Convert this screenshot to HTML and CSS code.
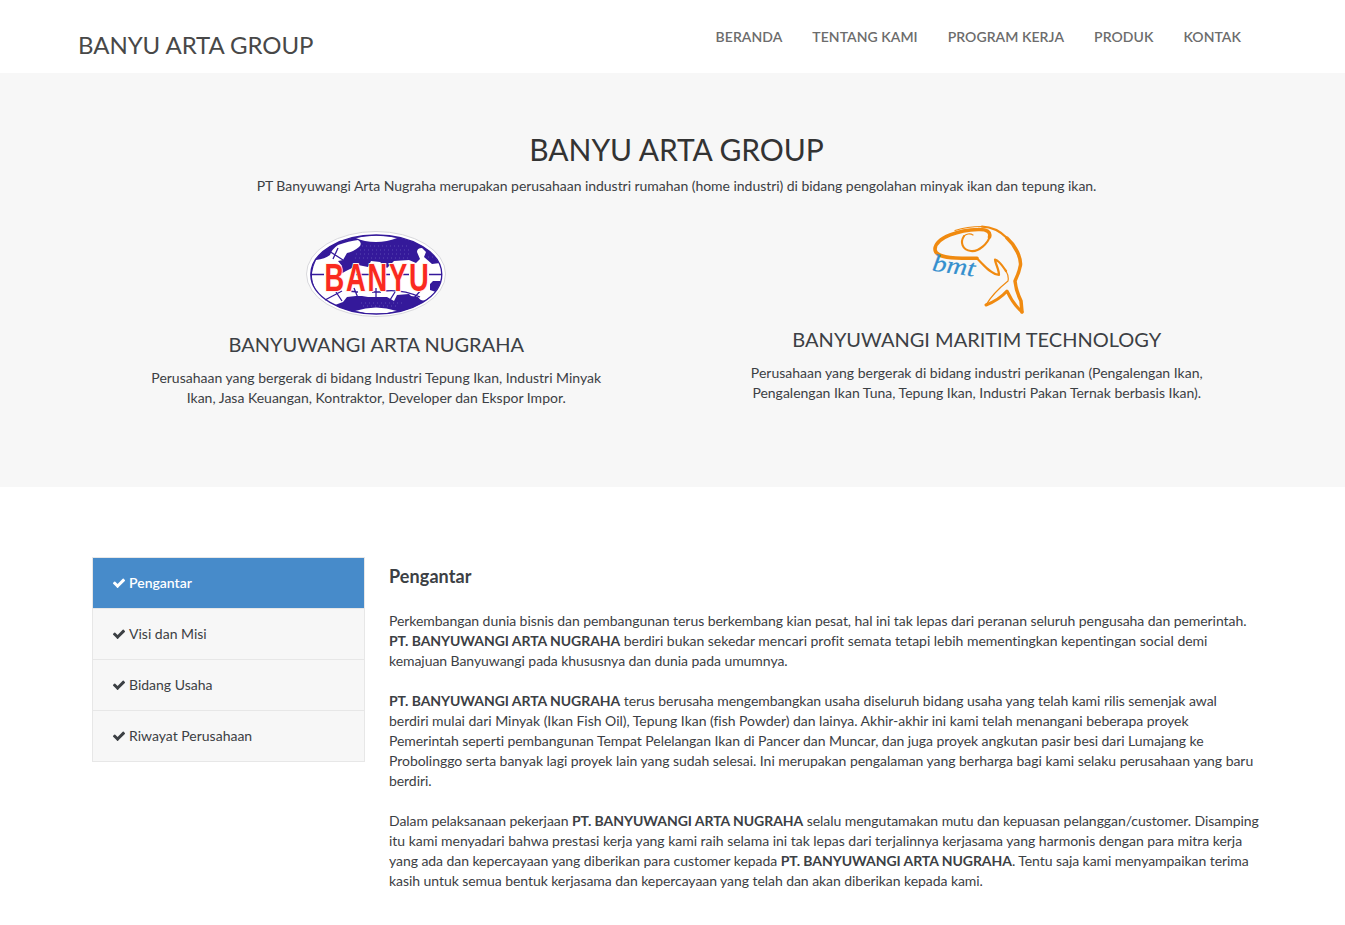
FILE: index.html
```html
<!DOCTYPE html>
<html lang="id">
<head>
<meta charset="utf-8">
<title>Banyu Arta Group</title>
<link rel="stylesheet" href="styles.css">
</head>
<body>
<header class="header">
  <a class="brand">BANYU ARTA GROUP</a>
  <nav class="nav"><a>BERANDA</a><a>TENTANG KAMI</a><a>PROGRAM KERJA</a><a>PRODUK</a><a>KONTAK</a></nav>
</header>
<section class="hero">
  <h1>BANYU ARTA GROUP</h1>
  <p class="lead">PT Banyuwangi Arta Nugraha merupakan perusahaan industri rumahan (home industri) di bidang pengolahan minyak ikan dan tepung ikan.</p>
  <div class="companies">
    <article class="company">
      <svg class="logo-banyu" viewBox="0 0 160 100" width="160" height="100">
        <ellipse cx="80" cy="52" rx="69.500" ry="42.500" fill="#fff" stroke="#d4d4d8" stroke-width=".9"/>
        <ellipse cx="80.300" cy="52.500" rx="65.500" ry="39.500" fill="#34199a"/>
        <g fill="#fff">
          <path d="M60 16Q80 11 101 16Q91 20 80 20Q68 20 60 16Z"/>
          <path d="M59 89Q80 82 101 89Q80 95 59 89Z"/>
          <path d="M16 51Q17 44 20 38Q29 37 34 33Q36 27 42 23Q53 19 62 18Q67 21 63 25Q57 30 51 31L47 38L42 39L46 44Q40 50 43 53L50 49L62 43L72 45L75 39L84 40L91 46L98 39L113 38L120 41L124 37L121 30Q121 26 126 26L130 30L128 35L136 42L144 41Q147 48 145 59L137 59L134 62L134 68L140 70L131 77Q126 81 122 75L115 74L113 72L101 73L98 79L91 75L72 75L66 74L60 74L51 75L47 80L39 83L31 79Q17 70 16 55Z"/>
        </g>
        <g fill="none" stroke="#34199a" stroke-width="1.300">
          <path d="M15 52.500H28M60 52.500H73M86 52.500H94M106 52.500H113M133 52.500H146M33 29L47 38M42 26L37 37M29 78L46 69M40 70L46 79M58 66L62 76M52 69L62 70M80 66V78M76 70L85 70M88 69Q106 67 124 75M99 70L94 78M118 76L126 67"/>
          <ellipse cx="80.300" cy="52.500" rx="65.500" ry="39.500"/>
        </g>
        <path d="M66 24H112M64 28H116M60 32H116M59 36H115M65 81H106M67 84H100M132 35H139" fill="none" stroke="#6e60bb" stroke-width=".7" stroke-dasharray="1 3"/>
        <text transform="translate(28.500 68.500) scale(.7 1)" class="banyu-text">BANYU</text>
      </svg>
      <h2>BANYUWANGI ARTA NUGRAHA</h2>
      <p>Perusahaan yang bergerak di bidang Industri Tepung Ikan, Industri Minyak<br>Ikan, Jasa Keuangan, Kontraktor, Developer dan Ekspor Impor.</p>
    </article>
    <article class="company maritime">
      <svg class="logo-bmt" viewBox="0 0 120 110" width="120" height="110">
        <g fill="none" stroke="#f08a10" stroke-linecap="round" stroke-linejoin="round">
          <path stroke-width="3.600" d="M57 43.300H42C29 43 15 42 15 34C16 22 40 15 58 14.500C67 14 71 17 69.500 22"/>
          <path stroke-width="2.100" d="M69.500 22C68 28 59 37 51 36C42 35 40 27 44 21"/>
          <path stroke-width="1.200" d="M44 21C46 19 50 18 53 20M35 15.500Q47 11.500 62 11.500M86 56Q89 61 88 66Q73 78 66 90"/>
          <path stroke-width="2.200" d="M62 11.700C71 12 80 16 87 23M57 43.500C63 49 70 59 79 60C79 54 75 48 75 44.500C80 46 83 52 86 56"/>
          <path stroke-width="3.500" d="M87 23C96 31 101 43 100.500 50Q99 58 95 66Q96 76 101 86L102 97"/>
          <path stroke-width="3" d="M66 90Q79 85 87 76Q93 89 102 97"/>
        </g>
        <text transform="translate(11.500 55.500) rotate(8)" textLength="43" lengthAdjust="spacingAndGlyphs" class="bmt-text">bmt</text>
      </svg>
      <h2>BANYUWANGI MARITIM TECHNOLOGY</h2>
      <p>Perusahaan yang bergerak di bidang industri perikanan (Pengalengan Ikan,<br>Pengalengan Ikan Tuna, Tepung Ikan, Industri Pakan Ternak berbasis Ikan).</p>
    </article>
  </div>
</section>
<main class="about">
  <svg width="0" height="0" class="defs"><symbol id="check" viewBox="0 0 1792 1792"><path d="M1671 566q0 40-28 68l-724 724-136 136q-28 28-68 28t-68-28l-136-136-362-362q-28-28-28-68t28-68l136-136q28-28 68-28t68 28l294 295 656-657q28-28 68-28t68 28l136 136q28 28 28 68z"/></symbol></svg>
  <aside class="tabs">
    <a class="tab active"><svg class="check"><use href="#check"/></svg>Pengantar</a>
    <a class="tab"><svg class="check"><use href="#check"/></svg>Visi dan Misi</a>
    <a class="tab"><svg class="check"><use href="#check"/></svg>Bidang Usaha</a>
    <a class="tab"><svg class="check"><use href="#check"/></svg>Riwayat Perusahaan</a>
  </aside>
  <div class="content">
    <h3>Pengantar</h3>
    <p>Perkembangan dunia bisnis dan pembangunan terus berkembang kian pesat, hal ini tak lepas dari peranan seluruh pengusaha dan pemerintah.<br><b>PT. BANYUWANGI ARTA NUGRAHA</b> <span class="loose">berdiri bukan sekedar mencari profit semata tetapi lebih mementingkan kepentingan social demi</span><br>kemajuan Banyuwangi pada khususnya dan dunia pada umumnya.</p>
    <p><b>PT. BANYUWANGI ARTA NUGRAHA</b> terus berusaha mengembangkan usaha diseluruh bidang usaha yang telah kami rilis semenjak awal<br><span class="loose">berdiri mulai dari Minyak (Ikan Fish Oil), Tepung Ikan (fish Powder) dan lainya. Akhir-akhir ini kami telah menangani beberapa proyek</span><br>Pemerintah seperti pembangunan Tempat Pelelangan Ikan di Pancer dan Muncar, dan juga proyek angkutan pasir besi dari Lumajang ke<br><span class="medium">Probolinggo serta banyak lagi proyek lain yang sudah selesai. Ini merupakan pengalaman yang berharga bagi kami selaku perusahaan yang baru</span><br>berdiri.</p>
    <p>Dalam pelaksanaan pekerjaan <b>PT. BANYUWANGI ARTA NUGRAHA</b> selalu mengutamakan mutu dan kepuasan pelanggan/customer. Disamping<br><span class="loose">itu kami menyadari bahwa prestasi kerja yang kami raih selama ini tak lepas dari terjalinnya kerjasama yang harmonis dengan para mitra kerja</span><br>yang ada dan kepercayaan yang diberikan para customer kepada <b>PT. BANYUWANGI ARTA NUGRAHA</b>. Tentu saja kami menyampaikan terima<br>kasih untuk semua bentuk kerjasama dan kepercayaan yang telah dan akan diberikan kepada kami.</p>
  </div>
</main>
</body>
</html>
```
FILE: styles.css
```css
* { box-sizing: border-box; }
body { margin: 0; background: #fff; color: #3c4044; font: 14px/20px Lato, "Liberation Sans", sans-serif; font-variant-ligatures: none; overflow: hidden; }
h1, h2, h3, p { margin: 0; font-weight: 400; }
.header { height: 73px; display: flex; justify-content: space-between; padding: 0 104px 0 78px; }
.brand { font-size: 24px; line-height: 30px; padding-top: 30px; color: #484848; letter-spacing: -.06px; }
.nav { display: flex; gap: 30px; padding-top: 27px; color: #6c6c6c; font-weight: 600; letter-spacing: .05px; white-space: nowrap; }
.hero { height: 414px; background: #f7f7f7; text-align: center; padding: 58px 68px 0 76px; }
.hero h1 { font-size: 30px; line-height: 36px; color: #333; letter-spacing: -.06px; }
.lead { margin-top: 9px; letter-spacing: -.04px; }
.companies { display: grid; grid-template-columns: 1fr 1fr; margin-top: 19px; white-space: nowrap; }
.company { display: flex; flex-direction: column; align-items: center; padding-top: 7px; }
.company h2 { font-size: 20px; line-height: 24px; margin: 10px 0 12px; }
.maritime { padding-top: 0; }
.maritime h2 { margin-top: 2px; }
.logo-bmt { margin-left: 7px; }
.banyu-text { font: bold 39px "Liberation Sans", sans-serif; letter-spacing: 2.6px; fill: #fa2a20; stroke: #fff3ec; stroke-width: 2px; paint-order: stroke; }
.bmt-text { font: italic 24px "Liberation Serif", serif; fill: #348fce; stroke: #348fce; stroke-width: .2px; }
.about { display: flex; padding: 70px 0 0 92px; gap: 24px; }
.defs { position: absolute; }
.tabs { width: 273px; height: 205px; border: 1px solid #e7e7e7; background: #f7f7f7; }
.tab { display: flex; align-items: center; height: 51px; padding-left: 19px; border-bottom: 1px solid #e7e7e7; gap: 3px; }
.tab:last-child { height: 50px; border-bottom: 0; }
.tab.active { background: #478bca; color: #fff; font-weight: 600; }
.check { width: 14px; height: 14px; fill: currentColor; }
.content { white-space: nowrap; letter-spacing: -.06px; }
.content h3 { font-size: 18px; line-height: 20px; font-weight: 700; margin: 9px 0 25px; letter-spacing: .1px; }
.content p { margin-bottom: 20px; }
.loose { letter-spacing: -.025px; }
.medium { letter-spacing: -.04px; }
b { font-weight: 700; }
```
